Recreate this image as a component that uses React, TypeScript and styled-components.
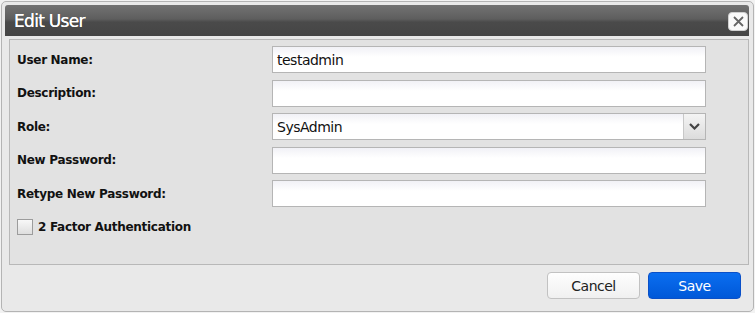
import React from "react";
import styled, { createGlobalStyle } from "styled-components";

const GlobalStyle = createGlobalStyle`
  html, body {
    margin: 0;
    padding: 0;
    background: #f2f2f2;
  }
  body {
    font-family: "DejaVu Sans", Verdana, sans-serif;
  }
`;

const Dialog = styled.div`
  width: 753px;
  height: 311px;
  box-sizing: border-box;
  margin: 1px 0 0 1px;
  border: 1px solid #b4b4b4;
  border-radius: 5px;
  background: #e9e9e9;
  padding: 3px 4px 2px 3px;
  display: flex;
  flex-direction: column;
`;

const TitleBar = styled.div`
  height: 31px;
  flex: none;
  display: flex;
  align-items: center;
  justify-content: space-between;
  padding: 0 1px 0 9px;
  border-radius: 3px 3px 0 0;
  background: linear-gradient(#727272 0%, #5e5e5e 45%, #4a4a4a 55%, #454545 100%);
`;

const Title = styled.span`
  color: #fff;
  font-size: 17px;
  letter-spacing: -0.7px;
  margin-top: 1px;
  text-shadow: 0 0 0.4px #fff;
`;

const CloseButton = styled.button`
  width: 20px;
  height: 19px;
  padding: 0;
  border: 1px solid #d0d0d0;
  border-radius: 4px;
  background: #fafafa;
  display: flex;
  align-items: center;
  justify-content: center;
  margin-top: 2px;
`;

const Panel = styled.div`
  margin: 3px 0 0 4px;
  height: 226px;
  box-sizing: border-box;
  border: 1px solid #b8b8b8;
  background: #e2e2e2;
  padding: 6px 0 0 7px;
  display: flex;
  flex-direction: column;
  gap: 6.5px;
`;

const Row = styled.div`
  display: grid;
  grid-template-columns: 255px 434px;
  align-items: center;
  height: 27px;
`;

const Label = styled.label`
  font-size: 12px;
  font-weight: bold;
  color: #111;
  letter-spacing: -0.3px;
`;

const Field = styled.div`
  height: 27px;
  box-sizing: border-box;
  border: 1px solid #b5b5b5;
  background: linear-gradient(#f1f1f6 0%, #fff 40%);
  display: flex;
  align-items: center;
  padding-left: 4px;
  font-family: "DejaVu Sans", Verdana, sans-serif;
  font-size: 14px;
  letter-spacing: -0.5px;
  color: #111;
`;

const SelectBox = styled(Field)`
  padding-right: 0;
  justify-content: space-between;
`;

const Arrow = styled.div`
  width: 21px;
  height: 25px;
  border-left: 1px solid #c8c8c8;
  background: linear-gradient(#f4f4f4, #dcdcdc);
  display: flex;
  align-items: center;
  justify-content: center;
`;

const CheckRow = styled.div`
  display: flex;
  align-items: center;
  gap: 5px;
  margin-top: 5px;
`;

const Box = styled.div`
  width: 14px;
  height: 14px;
  border: 1px solid #9c9c9c;
  background: linear-gradient(#f8f8f8, #dedede);
`;

const Footer = styled.div`
  flex: 1;
  display: flex;
  justify-content: flex-end;
  align-items: flex-start;
  gap: 8px;
  padding: 7px 8px 0 0;
`;

const Button = styled.button<{ $primary?: boolean }>`
  width: 93px;
  height: 27px;
  border-radius: 4px;
  font-family: "DejaVu Sans", Verdana, sans-serif;
  font-size: 14px;
  letter-spacing: -0.5px;
  border: 1px solid ${(p) => (p.$primary ? "#0a50c8" : "#c2c2c2")};
  background: ${(p) =>
    p.$primary ? "linear-gradient(#0a6ef0, #0058d8)" : "linear-gradient(#fefefe, #f0f0f0)"};
  color: ${(p) => (p.$primary ? "#fff" : "#222")};
`;

const fields = [
  { label: "User Name:", value: "testadmin" },
  { label: "Description:", value: "" },
  { label: "Role:", value: "SysAdmin", select: true },
  { label: "New Password:", value: "" },
  { label: "Retype New Password:", value: "" },
];

export default function App() {
  return (
    <>
      <GlobalStyle />
      <Dialog>
        <TitleBar>
          <Title>Edit User</Title>
          <CloseButton>
            <svg width="13" height="13" viewBox="0 0 13 13">
              <path d="M2 2 L11 11 M11 2 L2 11" stroke="#666" strokeWidth="1.8" />
            </svg>
          </CloseButton>
        </TitleBar>
        <Panel>
          {fields.map((f) => (
            <Row key={f.label}>
              <Label>{f.label}</Label>
              {f.select ? (
                <SelectBox>
                  {f.value}
                  <Arrow>
                    <svg width="11" height="7" viewBox="0 0 11 7">
                      <path d="M1 1 L5.5 5.5 L10 1" fill="none" stroke="#444" strokeWidth="2.2" />
                    </svg>
                  </Arrow>
                </SelectBox>
              ) : (
                <Field>{f.value}</Field>
              )}
            </Row>
          ))}
          <CheckRow>
            <Box />
            <Label>2 Factor Authentication</Label>
          </CheckRow>
        </Panel>
        <Footer>
          <Button>Cancel</Button>
          <Button $primary>Save</Button>
        </Footer>
      </Dialog>
    </>
  );
}
